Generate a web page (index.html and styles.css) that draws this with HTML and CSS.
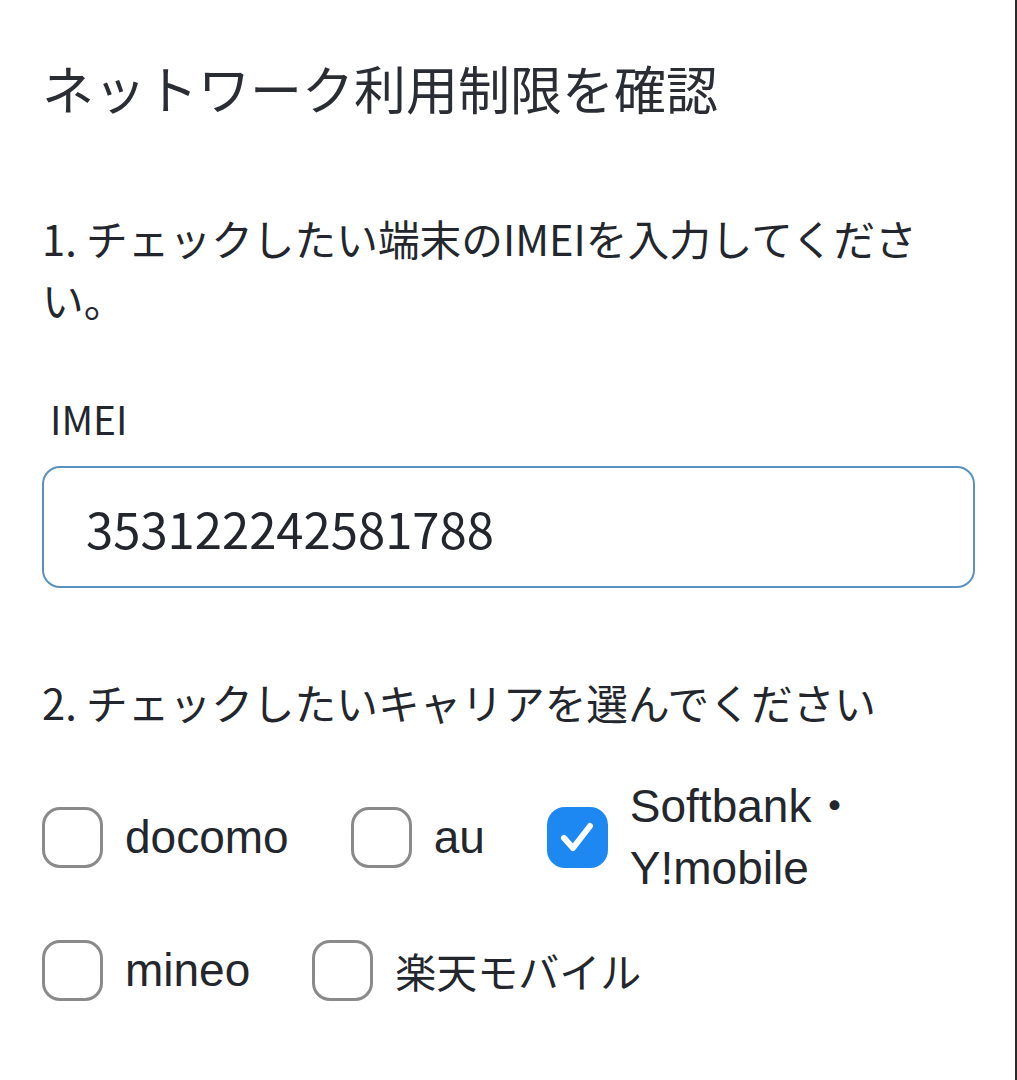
FILE: index.html
```html
<!DOCTYPE html>
<html lang="ja">
<head>
<meta charset="utf-8">
<title>ネットワーク利用制限を確認</title>
<link rel="stylesheet" href="styles.css">
</head>
<body>
<main class="page">
  <h1 class="title">ネットワーク利用制限を確認</h1>
  <p class="step">1. チェックしたい端末のIMEIを入力してください。</p>
  <label class="field-label" for="imei">IMEI</label>
  <div class="input" id="imei">353122242581788</div>
  <p class="step step-2">2. チェックしたいキャリアを選んでください</p>
  <div class="carriers">
    <div class="carrier">
      <span class="box"></span>
      <span class="name">docomo</span>
    </div>
    <div class="carrier">
      <span class="box"></span>
      <span class="name">au</span>
    </div>
    <div class="carrier">
      <span class="box checked">
        <svg viewBox="0 0 60 60" width="60" height="60"><path d="M17 31 L26 41 L43 19" fill="none" stroke="#fff" stroke-width="6" stroke-linecap="round" stroke-linejoin="round"/></svg>
      </span>
      <span class="name">Softbank・<br>Y!mobile</span>
    </div>
    <div class="carrier">
      <span class="box"></span>
      <span class="name">mineo</span>
    </div>
    <div class="carrier">
      <span class="box"></span>
      <span class="name name-ja">楽天モバイル</span>
    </div>
  </div>
</main>
</body>
</html>
```

FILE: styles.css
```css
html, body {
  margin: 0;
  padding: 0;
  background: #ffffff;
}

body {
  font-family: "Noto Sans CJK JP", "Noto Sans", sans-serif;
  color: #23272d;
}

.page {
  box-sizing: border-box;
  width: 1017px;
  min-height: 1080px;
  padding: 52px 40px 0 42px;
  border-right: 2px solid #2a2a2a;
}

.title {
  margin: 0;
  font-size: 52px;
  line-height: 72px;
  font-weight: 400;
  color: #2a2e34;
}

.step {
  margin: 84px 0 0 0;
  font-size: 41.7px;
  line-height: 61px;
  font-weight: 400;
}

.field-label {
  display: block;
  margin: 62px 0 0 8px;
  font-size: 39px;
  line-height: 52px;
}

.input {
  box-sizing: border-box;
  margin-top: 22px;
  height: 122px;
  border: 2px solid #5a92bf;
  border-radius: 18px;
  padding: 0 42px;
  display: flex;
  align-items: center;
  font-size: 49px;
  color: #23272d;
}

.step-2 {
  margin-top: 84px;
}

.carriers {
  margin-top: 42px;
  display: flex;
  flex-wrap: wrap;
  align-items: center;
  column-gap: 62px;
  row-gap: 40px;
}

.carrier {
  display: flex;
  align-items: center;
  gap: 22px;
}

.box {
  box-sizing: border-box;
  flex: none;
  width: 61px;
  height: 61px;
  border: 3px solid #8a8a8a;
  border-radius: 18px;
  display: flex;
  align-items: center;
  justify-content: center;
}

.box.checked {
  border: none;
  background: #1e88f2;
}

.box svg {
  display: block;
}

.name {
  font-family: "Liberation Sans", "Noto Sans CJK JP", sans-serif;
  font-size: 46px;
  line-height: 62px;
  color: #23272d;
}

.name-ja {
  font-family: "Noto Sans CJK JP", sans-serif;
  font-size: 41px;
}
```
